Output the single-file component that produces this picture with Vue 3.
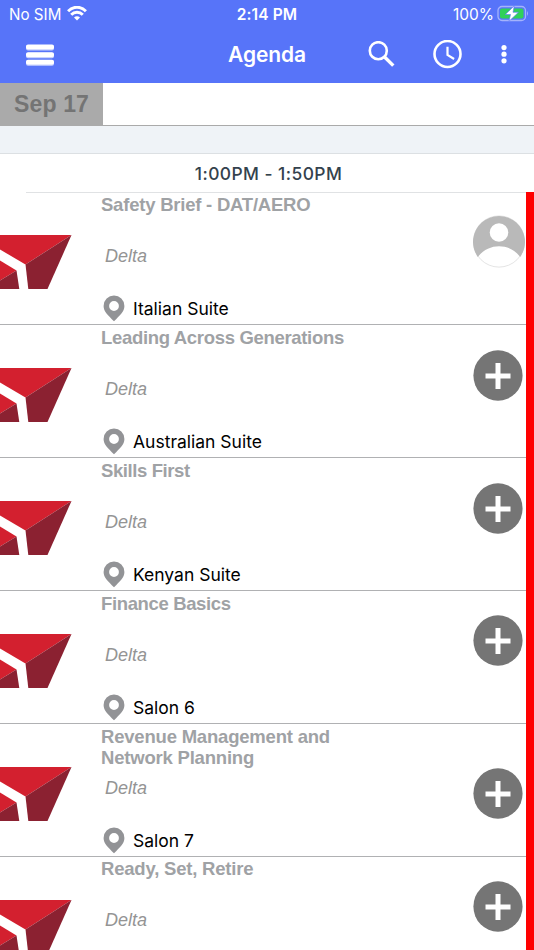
<script setup>
const sessions = [
  { title: ['Safety Brief - DAT/AERO'], tracking: -0.22, place: 'Italian Suite', joined: true },
  { title: ['Leading Across Generations'], tracking: -0.32, place: 'Australian Suite' },
  { title: ['Skills First'], tracking: -0.4, place: 'Kenyan Suite' },
  { title: ['Finance Basics'], tracking: -0.36, place: 'Salon 6' },
  { title: ['Revenue Management and', 'Network Planning'], tracking: -0.2, place: 'Salon 7' },
  { title: ['Ready, Set, Retire'], tracking: -0.2, place: '' },
]
</script>

<template>
  <div class="screen">
    <header class="header">
      <div class="status">
        <div class="carrier">
          <span>No SIM</span>
          <svg width="20" height="15" viewBox="0 0 20 15" fill="none" stroke="#fff" stroke-width="2.9">
            <path d="M1.100 5.200C6-.1 14-.1 18.900 5.200" />
            <path d="M4.200 8.700C7.400 5.400 12.600 5.400 15.800 8.700" />
            <path d="M10 14.600 7 11.500C8.700 9.900 11.300 9.900 13 11.500Z" fill="#fff" stroke="none" />
          </svg>
        </div>
        <span class="clock">2:14 PM</span>
        <div class="power">
          <span>100%</span>
          <svg width="32" height="18" viewBox="0 0 32 18">
            <rect x="1" y="1.500" width="27.500" height="14" rx="4" fill="none" stroke="#a4b3fc" stroke-width="1.300" />
            <rect x="3" y="3.500" width="23.500" height="10" rx="2" fill="#30d158" />
            <path d="M30 6q2 2.500 0 5z" fill="#a4b3fc" />
            <path d="M17.300 .8 8.300 9.500h5.200l-1.500 6.700 9.500-8.900h-5.500z" fill="#fff" stroke="#5774f9" stroke-width=".6" />
          </svg>
        </div>
      </div>
      <nav class="nav">
        <svg class="menu" width="30" height="22" viewBox="0 0 30 22">
          <g fill="#c9d2fe"><rect x="1" y="1" width="28" height="5.500" rx="2" /><rect x="1" y="8.700" width="28" height="5.500" rx="2" /><rect x="1" y="16.300" width="28" height="5.500" rx="2" /></g>
          <g fill="#fff"><rect x="1" y=".5" width="28" height="4.800" rx="2" /><rect x="1" y="8.200" width="28" height="4.800" rx="2" /><rect x="1" y="15.800" width="28" height="4.800" rx="2" /></g>
        </svg>
        <h1>Agenda</h1>
        <div class="tools">
          <svg width="27" height="27" viewBox="0 0 27 27" fill="none" stroke="#fff">
            <circle cx="10.300" cy="9.700" r="8.500" stroke-width="2.600" />
            <path d="m16.300 15.800 9 8.800" stroke-width="3.400" />
          </svg>
          <svg width="30" height="30" viewBox="0 0 30 30" fill="none" stroke="#fff">
            <circle cx="14.500" cy="14" r="13" stroke-width="2.600" />
            <path d="M14.500 6.800v8.200l6.600 4" stroke-width="2.200" />
          </svg>
          <svg width="6" height="20" viewBox="0 0 6 20" fill="#fff">
            <circle cx="3" cy="2.600" r="2.600" /><circle cx="3" cy="9.200" r="2.600" /><circle cx="3" cy="15.800" r="2.600" />
          </svg>
        </div>
      </nav>
    </header>
    <div class="days"><div class="day"><span>Sep 17</span></div></div>
    <div class="gap"></div>
    <div class="slot"><span>1:00PM - 1:50PM</span></div>
    <div class="rule"></div>
    <main>
      <article v-for="s in sessions" :key="s.title[0]" class="row">
        <svg class="logo" width="72" height="54" viewBox="0 0 72 54">
          <path d="M0 0h71.500L25.500 29.500 0 14.500z" fill="#d3202f" />
          <path d="M71.500 0 47.500 54H28.300L25.500 29.500z" fill="#8b2131" />
          <path d="M0 25.500 16.500 35.500 0 45.500z" fill="#d3202f" />
          <path d="M0 45.500 16.500 35.500 19.300 54H0z" fill="#8b2131" />
        </svg>
        <div class="info">
          <h2 :style="{ letterSpacing: s.tracking + 'px' }"><span v-for="line in s.title" :key="line">{{ line }}</span></h2>
          <p class="host">Delta</p>
          <div v-if="s.place" class="place">
            <svg width="22" height="27" viewBox="0 0 22 27">
              <path fill-rule="evenodd" d="M11 .5A10.400 10.400 0 0 0 .6 10.900C.6 16.500 5 20 11 26.300 17 20 21.400 16.500 21.400 10.900A10.400 10.400 0 0 0 11 .5ZM11 6.100a4.900 4.900 0 1 1 0 9.800a4.900 4.900 0 1 1 0-9.800Z" fill="#929396" />
            </svg>
            <span>{{ s.place }}</span>
          </div>
        </div>
        <div class="action" :class="{ lower: s.title.length > 1, joined: s.joined }">
          <svg v-if="s.joined" width="52" height="53" viewBox="0 0 52 53">
            <circle cx="26" cy="26.500" r="25.600" fill="#fff" stroke="#ddd" stroke-width=".8" />
            <path d="M4.800 42A26 26 0 1 1 47.200 42C36.500 27.500 15.500 27.500 4.800 42Z" fill="#b9b9b9" />
            <circle cx="26" cy="17.500" r="9.300" fill="#fff" />
          </svg>
          <svg v-else width="50" height="51" viewBox="0 0 50 51">
            <ellipse cx="25" cy="25.500" rx="24.600" ry="25.200" fill="#757575" />
            <path d="M25 13v26M12.500 26h25" stroke="#fff" stroke-width="5" />
          </svg>
        </div>
        <div class="track"></div>
      </article>
    </main>
  </div>
</template>

<style>
body { margin: 0; background: #fff; overflow: hidden; }
</style>

<style scoped>
* { box-sizing: border-box; }
svg { display: block; flex: none; }
.screen { width: 534px; height: 950px; overflow: hidden; background: #fff; font-family: "Liberation Sans", Arial, sans-serif; }
.header { height: 83px; background: #5774f9; color: #fff; font-family: Inter, sans-serif; }
.status { height: 27px; display: grid; grid-template-columns: 1fr auto 1fr; align-items: center; padding: 1px 9px 0 9px; font-size: 16px; }
.carrier, .power { display: flex; align-items: center; gap: 6px; }
.carrier { font-size: 15.200px; }
.carrier svg { margin-bottom: 2px; }
.power { justify-content: flex-end; gap: 3px; font-size: 15.500px; margin-right: -4px; }
.clock { font-weight: 600; font-size: 15.500px; letter-spacing: .1px; }
.nav { height: 55px; display: grid; grid-template-columns: 1fr auto 1fr; align-items: center; padding: 0 27px 0 25px; }
h1 { margin: 0; font-size: 21px; line-height: 26px; font-weight: 600; letter-spacing: -.1px; padding-left: 2px; }
.tools { display: flex; justify-content: flex-end; align-items: center; gap: 38px; }
.days { height: 43px; border-bottom: 1px solid #aaa; }
.day { width: 103px; height: 43px; background: #aaa; color: #747474; font-weight: 700; font-size: 23px; line-height: 42px; padding-left: 14px; letter-spacing: .15px; }
.gap { height: 28px; background: #eff3f7; border-bottom: 1px solid #dce0e3; }
.slot { height: 38px; text-align: center; line-height: 39px; font-family: Inter, sans-serif; font-weight: 550; font-size: 17.400px; letter-spacing: .45px; color: #34424d; padding-left: 3px; }
.rule { height: 1px; margin: 0 0 -.6px 26px; background: #e0e2e4; }
.row { height: 132.900px; display: grid; grid-template-columns: 101px 1fr 61px 8px; border-bottom: 1.300px solid #b0b1b3; }
.logo { margin-top: 42.800px; }
h2 { margin: 0; height: 49.600px; padding-top: 1.600px; font-size: 18.500px; line-height: 21.500px; font-weight: 700; color: #9fa2a5; white-space: nowrap; }
h2 span { display: block; }
.host { margin: 0 0 0 4px; height: 28px; line-height: 28px; font-size: 18px; font-style: italic; color: #949494; }
.place { display: flex; align-items: center; height: 27px; margin: 25px 0 0 2px; gap: 8px; font-family: Inter, sans-serif; font-size: 17.500px; color: #000; }
.action { padding: 24.400px 0 0 8px; }
.action.lower { padding-top: 44.400px; }
.action.joined { padding: 22.500px 0 0 8px; }
.track { background: #f00; height: 132.900px; }
</style>
